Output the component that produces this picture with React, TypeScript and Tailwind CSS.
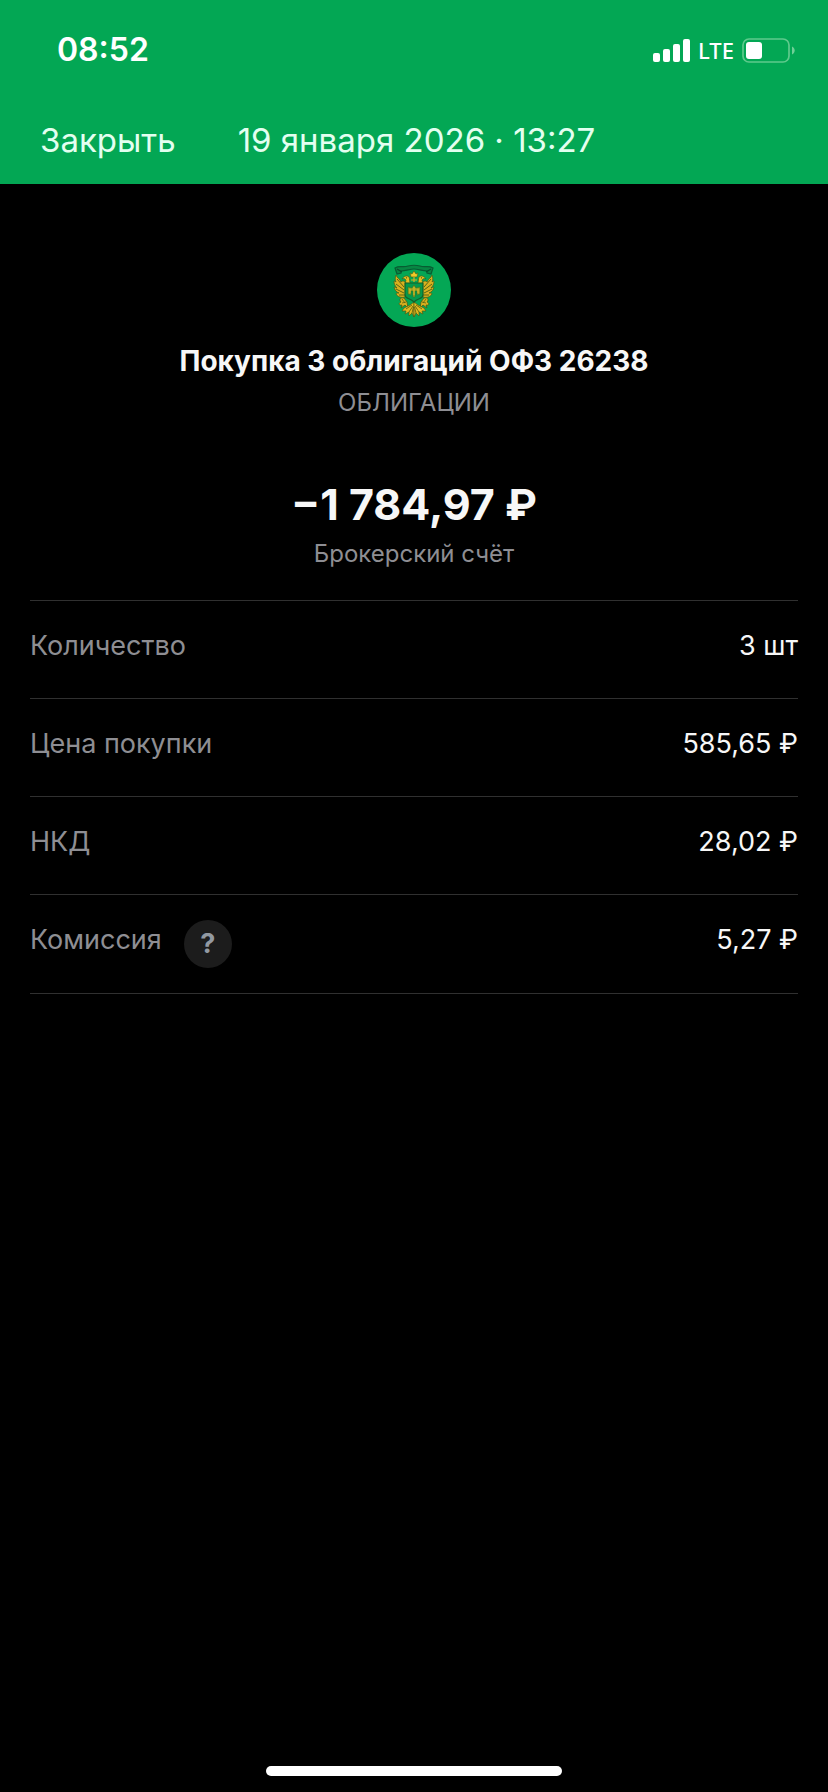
import React from 'react';

interface DetailRow {
  label: string;
  value: string;
  hint?: boolean;
}

const details: DetailRow[] = [
  { label: 'Количество', value: '3 шт' },
  { label: 'Цена покупки', value: '585,65 ₽' },
  { label: 'НКД', value: '28,02 ₽' },
  { label: 'Комиссия', value: '5,27 ₽', hint: true },
];

const SignalIcon: React.FC = () => (
  <svg width="37" height="23" viewBox="0 0 37 23" fill="#fff" aria-hidden="true">
    <rect x="0" y="14" width="7" height="9" rx="2" />
    <rect x="10" y="10" width="7" height="13" rx="2" />
    <rect x="20" y="5" width="7" height="18" rx="2" />
    <rect x="30" y="0" width="7" height="23" rx="2" />
  </svg>
);

const BatteryIcon: React.FC = () => (
  <svg width="53" height="25" viewBox="0 0 53 25" fill="none" aria-hidden="true">
    <rect x="1" y="1" width="46" height="23" rx="6" stroke="#5fca8c" strokeWidth="1.7" />
    <rect x="4" y="4" width="16" height="17" rx="3" fill="#fff" />
    <path d="M50 8.5c3.6 1.6 3.6 6.4 0 8z" fill="#6fcf97" />
  </svg>
);

// One half of the eagle, mirrored for the other side
const EagleHalf: React.FC = () => (
  <g>
    <path
      d="M-6 -4C-9 -9 -11 -10 -13 -8C-14 -11 -17 -12 -18 -15C-19 -12 -19 -10 -18 -8C-19 -9 -20 -9 -20 -9C-20 -6 -19 -4 -17 -2C-19 -3 -20 -3 -20 -3C-19 0 -18 2 -15 3C-17 3 -18 3 -18 4C-16 7 -13 8 -9 7Z"
      fill="#d9b01f"
      stroke="#4b5c12"
      strokeWidth="0.7"
    />
    <path d="M-17 -11L-10 -3M-18 -6L-10 0M-18 -1L-10 3M-15 5L-9 5" stroke="#4b5c12" strokeWidth="0.9" />
    <path
      d="M-3 -6C-5 -8 -4 -11 -5 -13C-7 -15 -10 -14 -12 -11C-10 -12 -9 -11 -8 -10C-9 -8 -8 -5 -6 -4Z"
      fill="#e6bf22"
      stroke="#4b5c12"
      strokeWidth="0.7"
    />
    <circle cx="-7.5" cy="-12.2" r="0.6" fill="#27481a" />
    <path
      d="M-10 8C-14 7 -15 10 -13 12C-16 13 -15 16 -12 15L-13 18L-9 15L-6 18L-7 12Z"
      fill="#d9b01f"
      stroke="#4b5c12"
      strokeWidth="0.8"
    />
    <path d="M-12 9L-9 13M-12 13L-8 12" stroke="#4b5c12" strokeWidth="0.7" />
    <path
      d="M0 12L-4 15L-10 18L-12 21L-8 21L-9 24L-5 22L-5 26L-2 23L0 27Z"
      fill="#e3b91f"
      stroke="#4b5c12"
      strokeWidth="0.7"
    />
    <path d="M-2 15L-8 19M-1 16L-5 22M-0.5 17L-2 23" stroke="#5f6413" strokeWidth="0.9" />
  </g>
);

const EmblemIcon: React.FC = () => (
  <svg className="size-[74px]" viewBox="-37 -37 74 74" fill="none" aria-hidden="true">
    <circle r="37" fill="#04a755" />
    <path
      d="M-19 -22C-14 -25 -11 -22 -6 -24C-2 -25 2 -25 6 -24C11 -22 14 -25 19 -22L17 -16L13 -17L13 -19C8 -19 4 -21 0 -21C-4 -21 -8 -19 -13 -19L-13 -17L-17 -16Z"
      fill="#078743"
      stroke="#075c32"
      strokeWidth="1.2"
    />
    <path d="M-17 -21L-12 -18M17 -21L12 -18" stroke="#064f2d" strokeWidth="1.2" />
    <EagleHalf />
    <g transform="scale(-1 1)">
      <EagleHalf />
    </g>
    <path d="M-3 -13L-4 -17L-2 -16L0 -19L2 -16L4 -17L3 -13Z" fill="#f0c927" stroke="#4b5c12" strokeWidth="0.6" />
    <path d="M0 -13V-8M-3 -10H3" stroke="#d9b01f" strokeWidth="1.2" />
    <path d="M-9 -7H9V5C9 9 4 8 0 12C-4 8 -9 9 -9 5Z" fill="#05994c" stroke="#12602a" strokeWidth="1.2" />
    <path
      d="M-6 -3L-2 -2L0 -5L2 -2L6 -3V4L3 5V1H1V7H-1V1H-3V5L-6 4Z"
      fill="#a5a522"
      stroke="#38721f"
      strokeWidth="0.6"
    />
    <path d="M-4 -1V3M4 -1V3M0 -3V5" stroke="#e3c02a" strokeWidth="0.9" />
  </svg>
);

const StatusBar: React.FC = () => (
  <div className="flex h-[100px] items-center justify-between pr-[33px] pl-[57px]">
    <span className="text-[32px] font-semibold">08:52</span>
    <div className="flex items-center gap-2">
      <SignalIcon />
      <span className="font-['Noto_Sans',sans-serif] text-[22px] leading-6 font-medium">LTE</span>
      <BatteryIcon />
    </div>
  </div>
);

const App: React.FC = () => {
  return (
    <div className="flex min-h-screen flex-col bg-black font-['Inter',sans-serif] text-[#f7f7f7]">
      <header className="bg-[#03a754] text-white">
        <StatusBar />
        <div className="flex h-[84px] items-start gap-[62px] px-10 pt-5 text-[33px] leading-10 text-[#e3fff0]">
          <button type="button">Закрыть</button>
          <h1>19 января 2026 · 13:27</h1>
        </div>
      </header>

      <main className="flex-1 px-[30px] pt-[69px]">
        <section className="flex flex-col items-center pb-[30px] text-center">
          <EmblemIcon />
          <h2 className="mt-4 text-[28px] leading-9 font-bold">Покупка 3 облигаций ОФЗ 26238</h2>
          <p className="mt-2 text-[24px] leading-8 text-[#8e8e93]">ОБЛИГАЦИИ</p>
          <p className="mt-[59px] text-[43px] leading-[52px] font-bold">−1 784,97 ₽</p>
          <p className="mt-2 text-[24px] leading-8 text-[#8e8e93]">Брокерский счёт</p>
        </section>

        <dl className="divide-y divide-[#303030] border-y border-[#303030] text-[27px] leading-10">
          {details.map((row) => (
            <div key={row.label} className="flex h-[98px] items-start justify-between pt-[25px]">
              <dt className="flex items-start gap-[22px] text-[#8e8e93]">
                {row.label}
                {row.hint && (
                  <button
                    type="button"
                    aria-label="Подробнее о комиссии"
                    className="flex size-12 items-center justify-center rounded-full bg-[#1c1c1c] text-[27px] font-bold text-[#9299a2]"
                  >
                    ?
                  </button>
                )}
              </dt>
              <dd>{row.value}</dd>
            </div>
          ))}
        </dl>
      </main>

      <footer className="flex justify-center pb-4">
        <div className="h-2.5 w-[296px] rounded-full bg-white" />
      </footer>
    </div>
  );
};

export default App;
